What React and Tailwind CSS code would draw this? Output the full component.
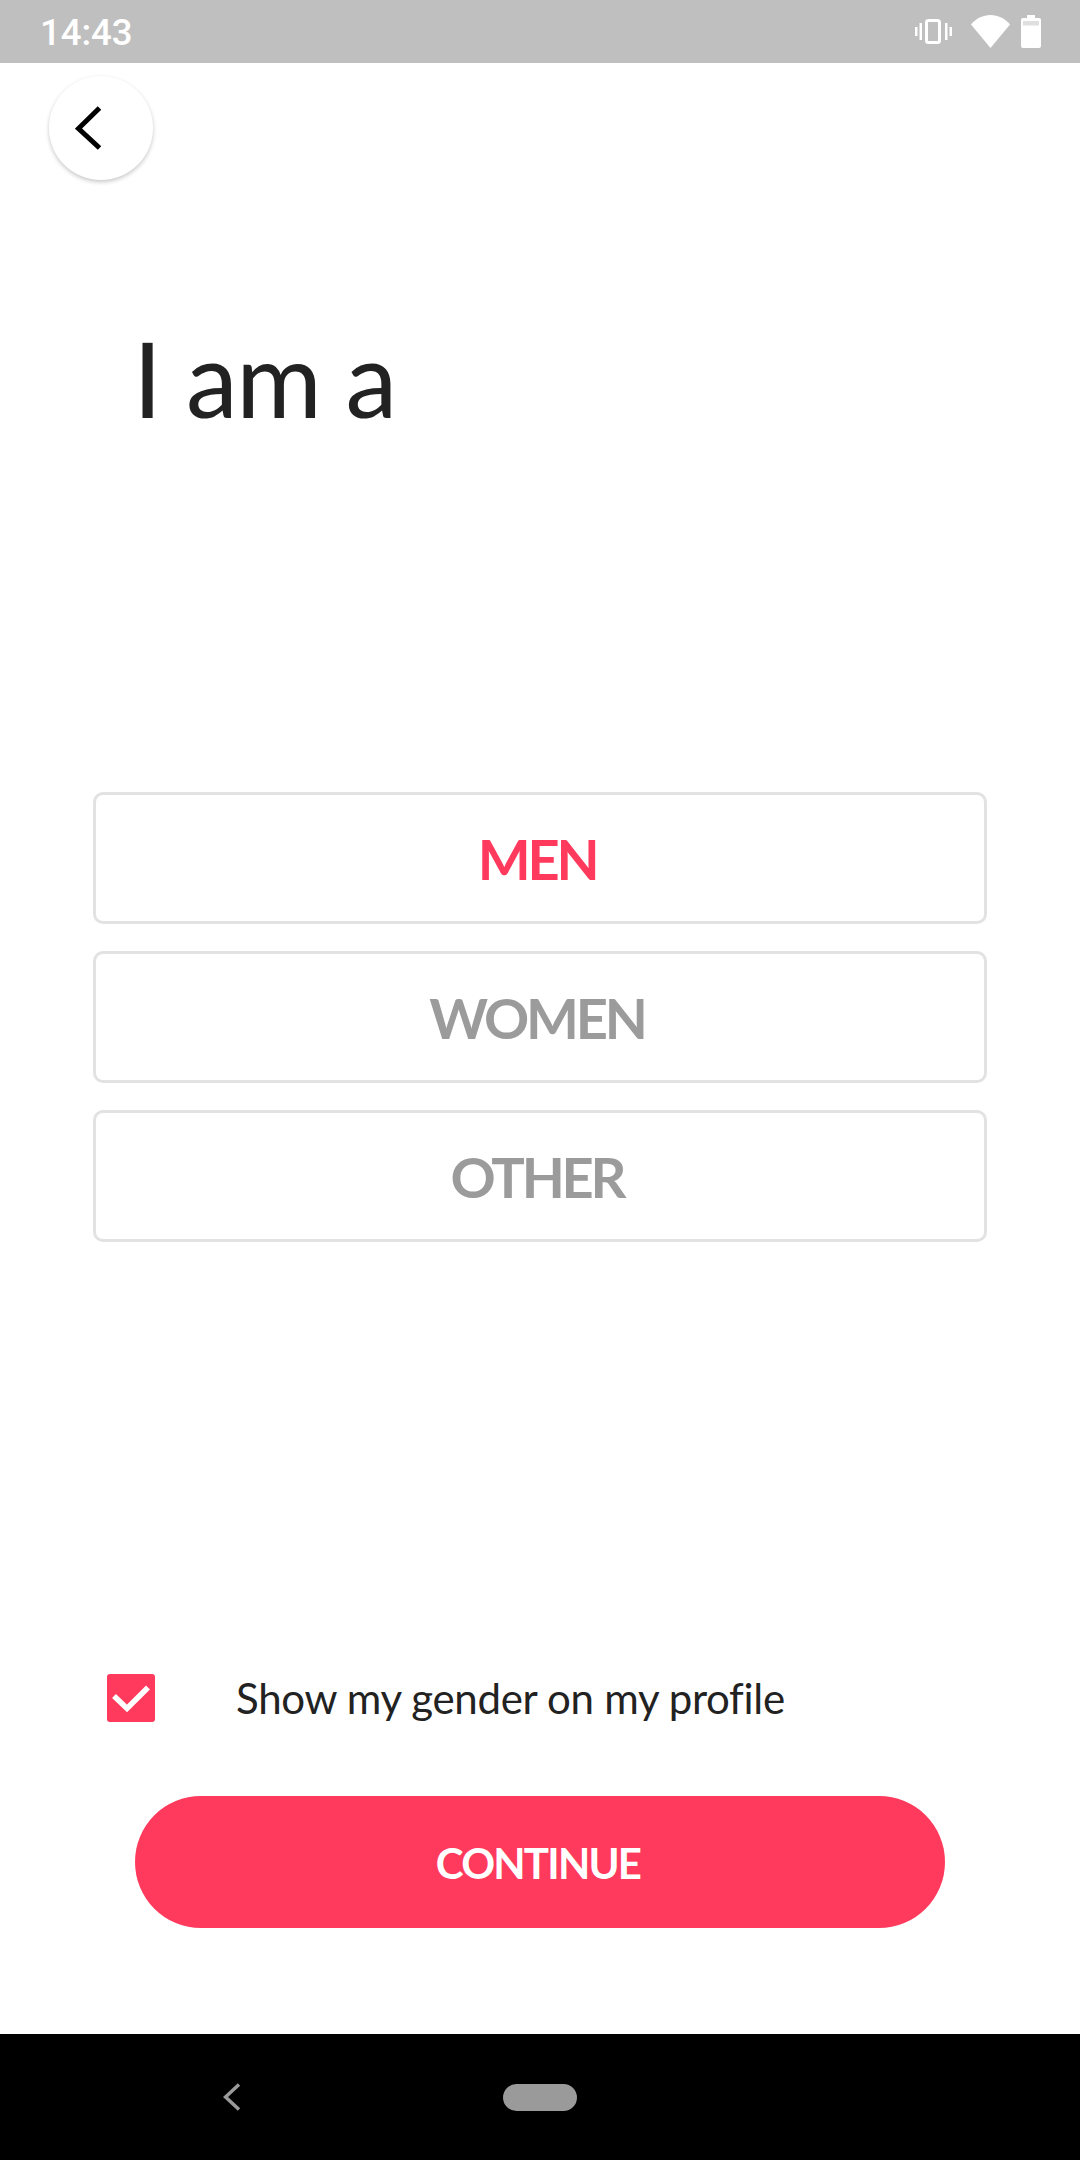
const font = "font-['Lato',sans-serif]";

function Option({ label, active }) {
  return (
    <button className={`h-[132px] w-full rounded-[10px] border-[3px] border-[#e2e2e2] bg-white pr-[6px] pt-[2px] text-[56px] font-bold tracking-[-3.2px] ${active ? "text-[#ff3a5c]" : "text-[#9b9b9b]"}`}>
      {label}
    </button>
  );
}

export default function App() {
  return (
    <div className={`flex h-[2160px] w-[1080px] flex-col bg-white ${font}`}>
      {/* status bar */}
      <div className="flex h-[63px] shrink-0 items-center justify-between bg-[#bfbfbf] pl-[40px] pr-[39px] text-white">
        <span className="mt-[4px] font-['Roboto',sans-serif] text-[36.5px] font-medium leading-none">14:43</span>
        <div className="flex items-center">
          <svg width="37" height="25" viewBox="0 0 37 25" fill="none" className="mr-[19px]">
            <rect x="11.5" y="1.5" width="13" height="22" rx="2" stroke="white" strokeWidth="3" />
            <rect x="0" y="8" width="2.5" height="9" fill="white" />
            <rect x="4.5" y="4" width="2.5" height="17" fill="white" />
            <rect x="30" y="4" width="2.5" height="17" fill="white" />
            <rect x="34.5" y="8" width="2.5" height="9" fill="white" />
          </svg>
          <svg width="39" height="33" viewBox="0 0 39 33" className="mr-[11px]">
            <path d="M19.5 33 L0 9.5 C5 3.5 12 0 19.5 0 C27 0 34 3.5 39 9.5 Z" fill="white" />
          </svg>
          <svg width="20" height="33" viewBox="0 0 20 33">
            <path d="M6 0 H14 V3 H18 Q20 3 20 5 V31 Q20 33 18 33 H2 Q0 33 0 31 V5 Q0 3 2 3 H6 Z" fill="white" />
            <rect x="2" y="6" width="16" height="4.5" fill="#bfbfbf" opacity="0.5" />
          </svg>
        </div>
      </div>

      {/* back button */}
      <div className="flex h-[120px] shrink-0 items-start pl-[49px] pt-[13px]">
        <div className="flex h-[104px] w-[104px] items-center justify-center rounded-full bg-white shadow-[0_2px_4px_rgba(0,0,0,0.22)]">
          <svg width="26" height="44" viewBox="0 0 26 44" fill="none" className="mr-[26px]">
            <path d="M24.5 2 L3.5 22.5 L24.5 42" stroke="black" strokeWidth="5" />
          </svg>
        </div>
      </div>

      <h1 className="ml-[133px] mt-[132px] text-[104px] font-normal leading-[125px] tracking-[-1.4px] text-[#222222]">I am a</h1>

      {/* options */}
      <div className="mx-[93px] mt-[352px] flex flex-col gap-[27px]">
        <Option label="MEN" active />
        <Option label="WOMEN" />
        <Option label="OTHER" />
      </div>

      {/* show gender */}
      <div className="ml-[107px] mt-[432px] flex items-center">
        <div className="flex h-[48px] w-[48px] items-center justify-center rounded-[3px] bg-[#ff3a5c]">
          <svg width="48" height="48" viewBox="0 0 48 48" fill="none">
            <path d="M7 22 L20 34.5 L41 13.5" stroke="white" strokeWidth="5.5" />
          </svg>
        </div>
        <span className="ml-[81px] text-[42px] leading-none tracking-[-0.3px] text-[#222222]">Show my gender on my profile</span>
      </div>

      <button className="mx-[135px] mt-[74px] h-[132px] shrink-0 rounded-full bg-[#ff3a5c] pr-[4px] pt-[2px] text-[42px] font-bold tracking-[-1.8px] text-white">
        CONTINUE
      </button>

      {/* nav bar */}
      <div className="mt-auto flex h-[126px] shrink-0 items-center bg-black">
        <svg width="18" height="28" viewBox="0 0 18 28" fill="none" className="ml-[223px]">
          <path d="M16 1.5 L2.5 14 L16 26.5" stroke="#9a9a9a" strokeWidth="3.5" />
        </svg>
        <div className="ml-[262px] h-[27px] w-[74px] rounded-full bg-[#9a9a9a]" />
      </div>
    </div>
  );
}
